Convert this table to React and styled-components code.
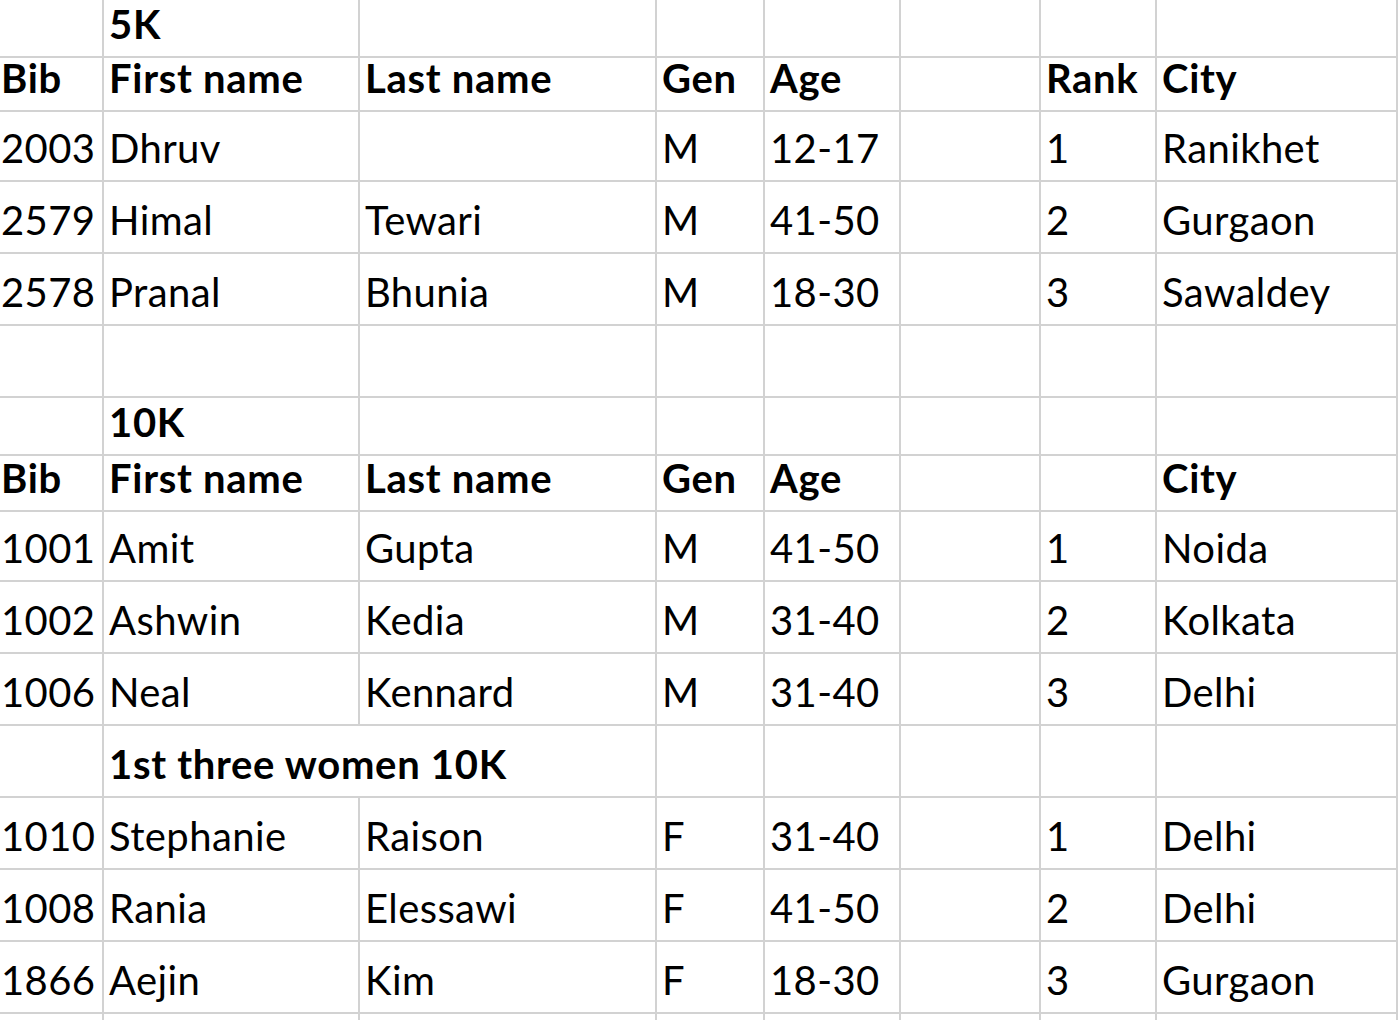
import React from "react";
import styled, { createGlobalStyle } from "styled-components";

const Global = createGlobalStyle`
  html, body { margin: 0; padding: 0; background: #fff; overflow: hidden; }
  body { font-family: Lato, "Open Sans", sans-serif; color: #000; }
`;

const COLS = "104px 256px 297px 108px 136px 140px 116px 241px";

const Sheet = styled.div`
  display: flex;
  flex-direction: column;
  width: 1398px;
  height: 1020px;
  overflow: hidden;
`;

const Row = styled.div`
  display: grid;
  grid-template-columns: ${COLS};
  height: ${(p) => p.$h}px;
  flex: none;
`;

const Cell = styled.div`
  box-sizing: border-box;
  border-right: 2px solid #d2d2d2;
  border-bottom: 2px solid #d2d2d2;
  display: flex;
  align-items: flex-end;
  padding: 0 0 8px ${(p) => (p.$first ? 1 : 5)}px;
  font-size: 40px;
  line-height: 48px;
  letter-spacing: ${(p) => (p.$bold ? 0.7 : 0.4)}px;
  font-weight: ${(p) => (p.$bold ? 700 : 400)};
  white-space: nowrap;
  overflow: visible;
  grid-column: ${(p) => (p.$span ? `span ${p.$span}` : "auto")};
`;

const rows = [
  { h: 54, bold: true, cells: ["", "5K", "", "", "", "", "", ""] },
  { h: 56, bold: true, cells: ["Bib", "First name", "Last name", "Gen", "Age", "", "Rank", "City"] },
  { h: 72, cells: ["2003", "Dhruv", "", "M", "12-17", "", "1", "Ranikhet"] },
  { h: 72, cells: ["2579", "Himal", "Tewari", "M", "41-50", "", "2", "Gurgaon"] },
  { h: 72, cells: ["2578", "Pranal", "Bhunia", "M", "18-30", "", "3", "Sawaldey"] },
  { h: 72, cells: ["", "", "", "", "", "", "", ""] },
  { h: 56, bold: true, cells: ["", "10K", "", "", "", "", "", ""] },
  { h: 56, bold: true, cells: ["Bib", "First name", "Last name", "Gen", "Age", "", "", "City"] },
  { h: 72, cells: ["1001", "Amit", "Gupta", "M", "41-50", "", "1", "Noida"] },
  { h: 72, cells: ["1002", "Ashwin", "Kedia", "M", "31-40", "", "2", "Kolkata"] },
  { h: 72, cells: ["1006", "Neal", "Kennard", "M", "31-40", "", "3", "Delhi"] },
  { h: 72, bold: true, span: true, cells: ["", "1st three women 10K", "", "", "", "", ""] },
  { h: 72, cells: ["1010", "Stephanie", "Raison", "F", "31-40", "", "1", "Delhi"] },
  { h: 72, cells: ["1008", "Rania", "Elessawi", "F", "41-50", "", "2", "Delhi"] },
  { h: 72, cells: ["1866", "Aejin", "Kim", "F", "18-30", "", "3", "Gurgaon"] },
  { h: 72, cells: ["", "", "", "", "", "", "", ""] },
];

export default function App() {
  return (
    <>
      <Global />
      <Sheet>
        {rows.map((r, i) => (
          <Row key={i} $h={r.h}>
            {r.cells.map((c, j) => (
              <Cell
                key={j}
                $first={j === 0}
                $bold={r.bold}
                $span={r.span && j === 1 ? 2 : undefined}
              >
                {c}
              </Cell>
            ))}
          </Row>
        ))}
      </Sheet>
    </>
  );
}
